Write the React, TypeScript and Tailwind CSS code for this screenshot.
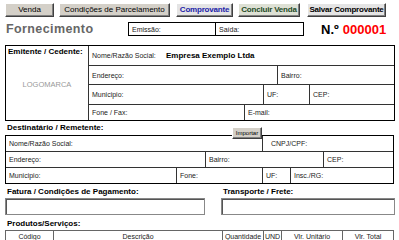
import React from 'react'

const btn =
  'h-[14px] flex items-center justify-center whitespace-nowrap overflow-hidden text-[8px] leading-none border border-t-white border-l-white border-r-[#404040] border-b-[#404040] shadow-[inset_-1px_-1px_0_#808080]'

function Cell({ label, className = '' }: { label: string; className?: string }) {
  return (
    <div className={`flex items-center pl-[3px] text-[7px] text-[#222] leading-none whitespace-nowrap ${className}`}>
      {label}
    </div>
  )
}

export default function App() {
  return (
    <div className="w-[399px] h-[240px] overflow-hidden bg-white font-['Liberation_Sans',Arial,sans-serif] text-black">
      {/* Top action buttons */}
      <div className="flex pt-[3px] pl-[5px]">
        <button className={`${btn} w-[49px] bg-[#d4d0c8]`}>Venda</button>
        <button className={`${btn} w-[111px] ml-[5px] bg-[#d4d0c8]`}>Condições de Parcelamento</button>
        <button className={`${btn} w-[57px] ml-[6px] bg-[#e4e4e4] font-bold text-[#1c1ca8] tracking-[-0.2px]`}>Comprovante</button>
        <button className={`${btn} w-[62px] ml-[5px] bg-[#dde0d4] font-bold text-[#1f4a26] tracking-[-0.2px]`}>Concluir Venda</button>
        <button className={`${btn} w-[79px] ml-[7px] bg-[#e4e4e4] font-bold tracking-[-0.2px]`}>Salvar Comprovante</button>
      </div>

      {/* Title, dates, number */}
      <div className="flex items-center h-[14px] mt-[5px]">
        <div className="w-[128px] pl-[6px] text-[12.5px] font-bold tracking-[0.4px] text-[#666] leading-none">
          Fornecimento
        </div>
        <div className="flex w-[176px] h-[14px] border border-black">
          <Cell label="Emissão:" className="w-[87px] border-r border-black text-[6.5px]" />
          <Cell label="Saída:" className="flex-1 text-[6.5px]" />
        </div>
        <div className="ml-[17px] flex items-baseline text-[13px] font-bold leading-none">
          <span>N.º</span>
          <span className="ml-[4px] text-[#ff0000]">000001</span>
        </div>
      </div>

      {/* Emitente */}
      <div className="mt-[9px] ml-[5px] w-[390px] h-[76px] flex border border-black">
        <div className="w-[83px] flex flex-col border-r border-[#333]">
          <div className="pl-[2px] pt-[2px] text-[8px] font-bold leading-none">Emitente / Cedente:</div>
          <div className="flex-1 flex items-center justify-center text-[7.5px] text-[#999] pb-[6px]">LOGOMARCA</div>
        </div>
        <div className="flex-1 flex flex-col">
          <div className="h-[20px] flex items-center border-b border-[#333]">
            <Cell label="Nome/Razão Social:" className="w-[77px]" />
            <span className="text-[8px] font-bold">Empresa Exemplo Ltda</span>
          </div>
          <div className="h-[19px] flex border-b border-[#333]">
            <Cell label="Endereço:" className="w-[189px] border-r border-[#333]" />
            <Cell label="Bairro:" className="flex-1" />
          </div>
          <div className="h-[20px] flex border-b border-[#333]">
            <Cell label="Municipio:" className="w-[175px] border-r border-[#333]" />
            <Cell label="UF:" className="w-[46px] border-r border-[#333]" />
            <Cell label="CEP:" className="flex-1" />
          </div>
          <div className="flex-1 flex">
            <Cell label="Fone / Fax:" className="w-[156px] border-r border-[#333]" />
            <Cell label="E-mail:" className="flex-1" />
          </div>
        </div>
      </div>

      {/* Destinatário */}
      <div className="h-[14px] flex items-center pl-[7px] text-[8px] font-bold leading-none">Destinatário / Remetente:</div>
      <div className="relative ml-[5px] w-[389px] border border-black">
        <button className="absolute -top-[9px] left-[226px] w-[30px] h-[12px] bg-[#d4d0c8] text-[6px] leading-none border border-t-white border-l-white border-r-[#404040] border-b-[#404040] shadow-[inset_-1px_-1px_0_#808080]">
          Importar
        </button>
        <div className="h-[16px] flex border-b border-[#333]">
          <Cell label="Nome/Razão Social:" className="w-[257px] border-r border-[#333]" />
          <Cell label="CNPJ/CPF:" className="flex-1 pl-[8px]" />
        </div>
        <div className="h-[16px] flex border-b border-[#333]">
          <Cell label="Endereço:" className="w-[200px] border-r border-[#333]" />
          <Cell label="Bairro:" className="w-[118px] border-r border-[#333]" />
          <Cell label="CEP:" className="flex-1" />
        </div>
        <div className="h-[15px] flex">
          <Cell label="Municipio:" className="w-[171px] border-r border-[#333]" />
          <Cell label="Fone:" className="w-[86px] border-r border-[#333]" />
          <Cell label="UF:" className="w-[28px] border-r border-[#333]" />
          <Cell label="Insc./RG:" className="flex-1" />
        </div>
      </div>

      {/* Fatura / Transporte */}
      <div className="flex mt-[2px]">
        <div className="ml-[5px] w-[200px]">
          <div className="h-[12px] flex items-center pl-[2px] text-[8px] font-bold leading-none">
            Fatura / Condições de Pagamento:
          </div>
          <div className="h-[17px] border border-[#888] shadow-[inset_1px_1px_0_#555]" />
        </div>
        <div className="ml-[16px] w-[174px]">
          <div className="h-[12px] flex items-center pl-[2px] text-[8px] font-bold leading-none">Transporte / Frete:</div>
          <div className="h-[17px] border border-[#888] shadow-[inset_1px_1px_0_#555]" />
        </div>
      </div>

      {/* Produtos */}
      <div className="h-[14px] flex items-end pb-[1px] pl-[7px] text-[8px] font-bold leading-none">Produtos/Serviços:</div>
      <div className="ml-[5px] mt-[1px] w-[389px] h-[14px] flex border border-[#666] text-[7px] text-[#222]">
        <div className="w-[48px] flex items-center justify-center border-r border-[#666]">Código</div>
        <div className="w-[169px] flex items-center justify-center border-r border-[#666]">Descrição</div>
        <div className="w-[41px] flex items-center justify-center border-r border-[#666]">Quantidade</div>
        <div className="w-[18px] flex items-center justify-center border-r border-[#666]">UND</div>
        <div className="w-[61px] flex items-center justify-center border-r border-[#666]">Vlr. Unitário</div>
        <div className="flex-1 flex items-center justify-center">Vlr. Total</div>
      </div>
    </div>
  )
}
